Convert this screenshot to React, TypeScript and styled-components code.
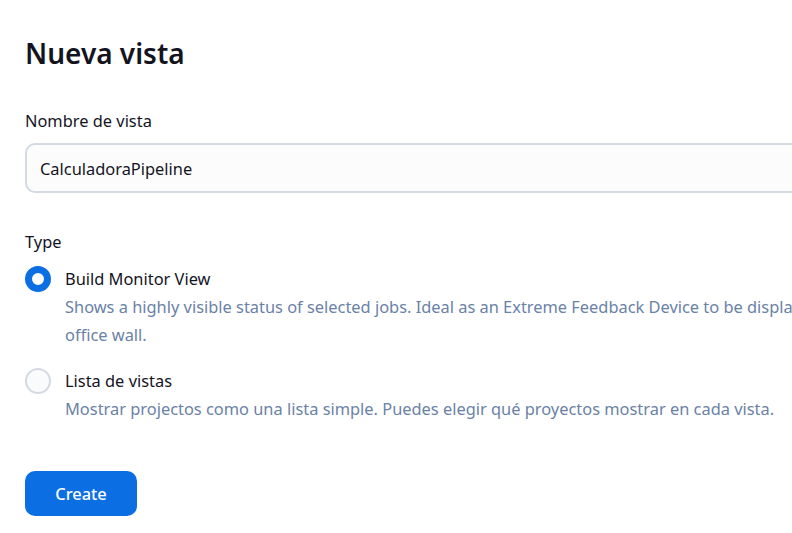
import React from "react";
import styled, { createGlobalStyle } from "styled-components";

const Global = createGlobalStyle`
  html, body { margin: 0; padding: 0; background: #fff; overflow: hidden; }
  body { font-family: "Noto Sans", "Open Sans", sans-serif; color: #14141f; }
`;

const Page = styled.div`
  width: 1100px;
  padding: 33px 25px 0;
  box-sizing: border-box;
`;

const Title = styled.h1`
  margin: 0 0 36px;
  font-size: 28px;
  font-weight: 600;
  line-height: 40px;
`;

const Field = styled.div`
  display: flex;
  flex-direction: column;
  gap: 10px;
  margin-bottom: 37px;
`;

const Label = styled.label`
  font-size: 16.4px;
  line-height: 24px;
`;

const Input = styled.input`
  height: 50px;
  box-sizing: border-box;
  border: 2px solid #d4d9e3;
  border-radius: 10px;
  background: #fcfcfd;
  padding: 0 13px;
  font: inherit;
  font-size: 16.4px;
  color: #14141f;
  outline: none;
`;

const Group = styled.div`
  display: flex;
  flex-direction: column;
`;

const Option = styled.label`
  display: grid;
  grid-template-columns: 26px 1fr;
  column-gap: 14px;
  margin-top: 11px;
  margin-bottom: 7px;
  cursor: pointer;
`;

const Radio = styled.span<{ $checked?: boolean }>`
  width: 26px;
  height: 26px;
  box-sizing: border-box;
  border-radius: 50%;
  margin-top: 1px;
  background: ${(p) => (p.$checked ? "#fff" : "#fafbfc")};
  border: ${(p) => (p.$checked ? "7px solid #0b6fe3" : "2px solid #d4d9e3")};
`;

const OptionText = styled.span`
  display: flex;
  flex-direction: column;
`;

const OptionTitle = styled.span`
  font-size: 16.4px;
  line-height: 28px;
`;

const OptionDesc = styled.span`
  font-size: 16.4px;
  line-height: 28px;
  color: #6a82a6;
  max-width: 820px;
`;

const Button = styled.button`
  margin-top: 41px;
  height: 45px;
  width: 112px;
  padding: 0;
  border: none;
  border-radius: 10px;
  background: #0b6fe3;
  color: #fff;
  font: inherit;
  font-size: 16.4px;
  font-weight: 500;
  cursor: pointer;
`;

export default function App() {
  return (
    <>
      <Global />
      <Page>
        <Title>Nueva vista</Title>
        <Field>
          <Label>Nombre de vista</Label>
          <Input defaultValue="CalculadoraPipeline" />
        </Field>
        <Group>
          <Label>Type</Label>
          <Option>
            <Radio $checked />
            <OptionText>
              <OptionTitle>Build Monitor View</OptionTitle>
              <OptionDesc>
                Shows a highly visible status of selected jobs. Ideal as an Extreme Feedback Device to be displayed on an office wall.
              </OptionDesc>
            </OptionText>
          </Option>
          <Option>
            <Radio />
            <OptionText>
              <OptionTitle>Lista de vistas</OptionTitle>
              <OptionDesc>
                Mostrar projectos como una lista simple. Puedes elegir qué proyectos mostrar en cada vista.
              </OptionDesc>
            </OptionText>
          </Option>
        </Group>
        <Button>Create</Button>
      </Page>
    </>
  );
}
